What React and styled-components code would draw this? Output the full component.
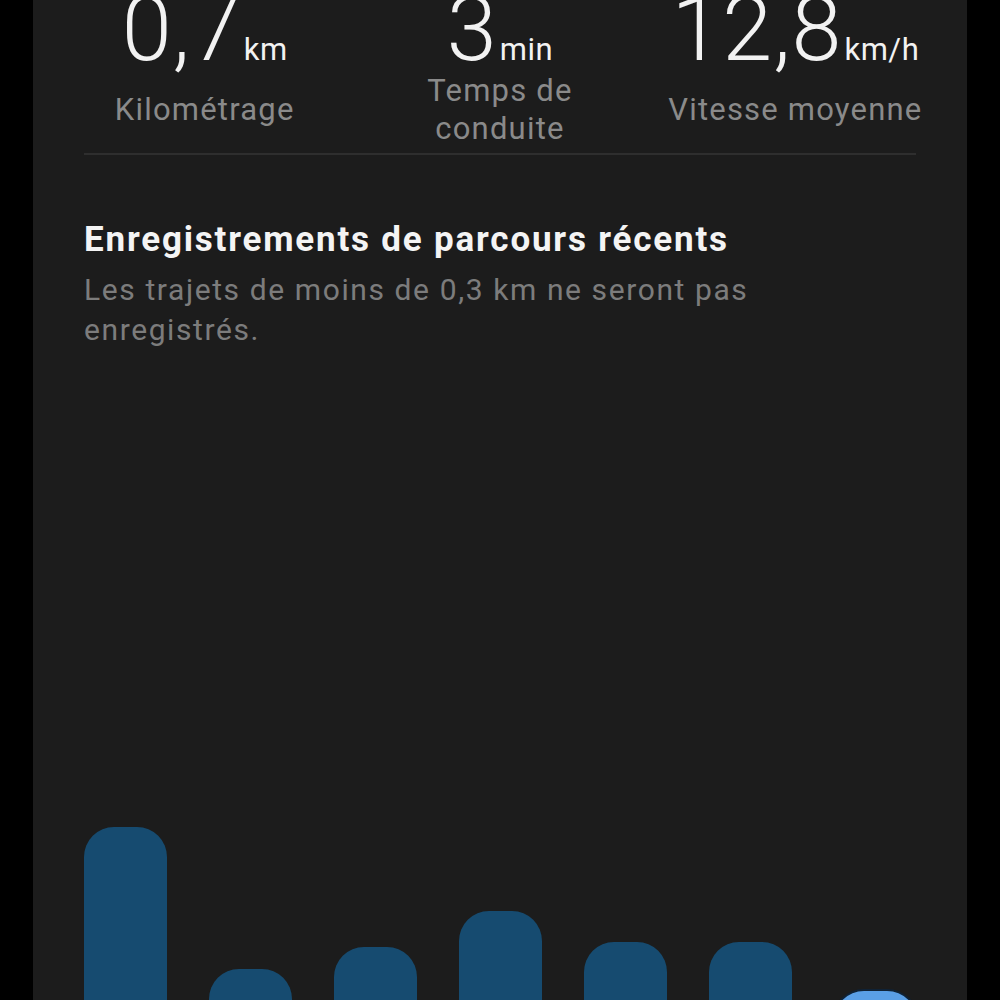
import React from "react";
import styled, { createGlobalStyle } from "styled-components";

const Global = createGlobalStyle`
  html, body { margin: 0; padding: 0; background: #000; }
  body { font-family: Roboto, "Noto Sans", "Liberation Sans", sans-serif; overflow: hidden; }
`;

const Screen = styled.div`
  height: 1000px;
  margin: 0 33px;
  background: #1c1c1c;
  overflow: hidden;
  padding: 0 51px;
  box-sizing: border-box;
`;

const Stats = styled.div`
  display: grid;
  grid-template-columns: repeat(3, 1fr);
  margin: -14px -27px 0;
`;

const Stat = styled.div`
  display: flex;
  flex-direction: column;
  align-items: center;
`;

const ValueRow = styled.div`
  display: flex;
  align-items: baseline;
  height: 88px;
  line-height: 88px;
  color: #f2f2f2;
`;

const Value = styled.span`
  font-size: 90px;
  font-weight: 300;
  letter-spacing: 1px;
`;

const Unit = styled.span`
  font-size: 31px;
  font-weight: 400;
  letter-spacing: 0.5px;
  margin-left: 2px;
`;

const Label = styled.div`
  height: 76px;
  margin-top: -2px;
  display: flex;
  align-items: center;
  text-align: center;
  font-size: 31px;
  line-height: 38px;
  letter-spacing: 1.2px;
  color: #8a8a8a;
`;

const Divider = styled.div`
  height: 2px;
  background: #2e2e2e;
  margin-top: 5px;
`;

const Heading = styled.h2`
  margin: 65px 0 0;
  font-size: 35px;
  font-weight: 700;
  line-height: 40px;
  letter-spacing: 1.8px;
  color: #f4f4f4;
`;

const Sub = styled.p`
  margin: 10px 0 0;
  font-size: 30px;
  line-height: 40px;
  letter-spacing: 1.6px;
  color: #7c7c7c;
  max-width: 700px;
`;

const Chart = styled.div`
  margin-top: 469px;
  height: 220px;
  display: flex;
  align-items: flex-end;
  gap: 42px;
`;

const Bar = styled.div`
  width: 83px;
  flex: none;
  border-radius: 30px 30px 0 0;
  background: ${(p) => (p.$active ? "#5a9fe6" : "#164b70")};
  ${(p) => p.$active && "box-shadow: 0 0 0 2px #0f2236;"}
`;

const stats = [
  { value: "0,7", unit: "km", label: "Kilométrage" },
  { value: "3", unit: "min", label: <>Temps de<br />conduite</> },
  { value: "12,8", unit: "km/h", label: "Vitesse moyenne" },
];

const bars = [828, 970, 948, 912, 943, 943, 992];
const chartBottom = 1040;

export default function App() {
  return (
    <>
      <Global />
      <Screen>
        <Stats>
          {stats.map((s, i) => (
            <Stat key={i}>
              <ValueRow>
                <Value>{s.value}</Value>
                <Unit>{s.unit}</Unit>
              </ValueRow>
              <Label>{s.label}</Label>
            </Stat>
          ))}
        </Stats>
        <Divider />
        <Heading>Enregistrements de parcours récents</Heading>
        <Sub>Les trajets de moins de 0,3 km ne seront pas enregistrés.</Sub>
        <Chart>
          {bars.map((top, i) => (
            <Bar key={i} $active={i === bars.length - 1} style={{ height: chartBottom - top }} />
          ))}
        </Chart>
      </Screen>
    </>
  );
}
